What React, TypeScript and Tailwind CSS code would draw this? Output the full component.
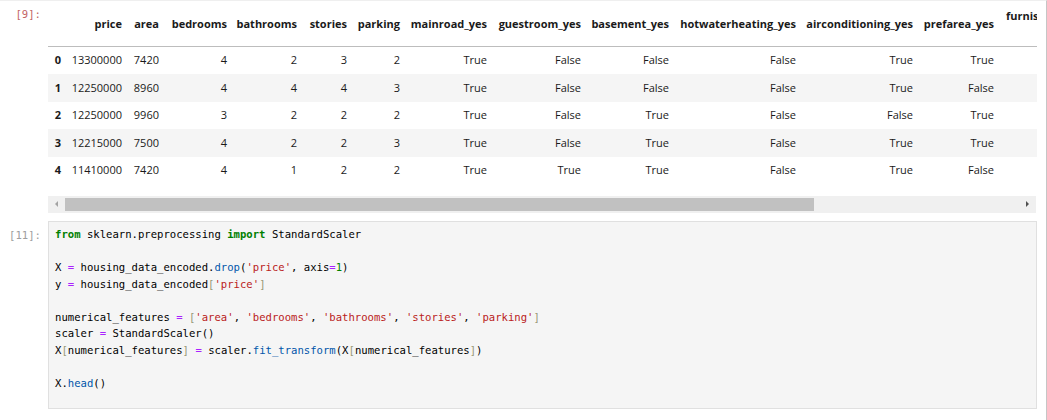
import React from 'react';

const columns = [
  { name: 'price', w: 62 },
  { name: 'area', w: 37 },
  { name: 'bedrooms', w: 68 },
  { name: 'bathrooms', w: 70 },
  { name: 'stories', w: 50 },
  { name: 'parking', w: 53 },
  { name: 'mainroad_yes', w: 87 },
  { name: 'guestroom_yes', w: 94 },
  { name: 'basement_yes', w: 88 },
  { name: 'hotwaterheating_yes', w: 127 },
  { name: 'airconditioning_yes', w: 117 },
  { name: 'prefarea_yes', w: 81 },
];

const rows = [
  ['13300000', '7420', '4', '2', '3', '2', 'True', 'False', 'False', 'False', 'True', 'True'],
  ['12250000', '8960', '4', '4', '4', '3', 'True', 'False', 'False', 'False', 'True', 'False'],
  ['12250000', '9960', '3', '2', '2', '2', 'True', 'False', 'True', 'False', 'False', 'True'],
  ['12215000', '7500', '4', '2', '2', '3', 'True', 'False', 'True', 'False', 'True', 'True'],
  ['11410000', '7420', '4', '1', '2', '2', 'True', 'True', 'True', 'False', 'True', 'False'],
];

const mono = "font-['DejaVu_Sans_Mono','Liberation_Mono',monospace] text-[10.6px]";

const Kw = ({ children }: { children: React.ReactNode }) => <span className="font-bold text-[#008000]">{children}</span>;
const Op = ({ children }: { children: React.ReactNode }) => <span className="text-[#aa22ff]">{children}</span>;
const Str = ({ children }: { children: React.ReactNode }) => <span className="text-[#ba2121]">{children}</span>;
const Num = ({ children }: { children: React.ReactNode }) => <span className="text-[#008000]">{children}</span>;
const Prop = ({ children }: { children: React.ReactNode }) => <span className="text-[#0055aa]">{children}</span>;
const Br = ({ children }: { children: React.ReactNode }) => <span className="text-[#999977]">{children}</span>;

function DataFrameOutput() {
  return (
    <div className="w-[989px] shrink-0 overflow-hidden">
      <table className="w-[1222px] table-fixed border-collapse font-['Open_Sans','Noto_Sans',sans-serif] text-[11px] text-[#1a1a1a]">
        <colgroup>
          <col className="w-[18px]" />
          {columns.map((c) => (
            <col key={c.name} style={{ width: c.w }} />
          ))}
          <col className="w-[270px]" />
        </colgroup>
        <thead>
          <tr className="border-b border-[#bdbdbd]">
            <th className="py-[5.5px]"></th>
            {columns.map((c) => (
              <th key={c.name} className="whitespace-nowrap py-[5.5px] pr-[6px] text-right align-middle font-bold leading-[17px]">
                {c.name}
              </th>
            ))}
            <th className="py-[5.5px] pl-[6px] pr-[6px] text-left align-middle font-bold leading-[17px]">
              <div className="whitespace-nowrap">furnishingstatus_semi-</div>
              <div className="whitespace-nowrap text-right">furnished</div>
            </th>
          </tr>
        </thead>
        <tbody>
          {rows.map((r, i) => (
            <tr key={i} className={i % 2 === 1 ? 'h-[27.5px] bg-[#f5f5f5]' : 'h-[27.5px]'}>
              <th className="pr-[5px] text-right font-bold">{i}</th>
              {r.map((v, j) => (
                <td key={j} className="whitespace-nowrap pr-[6px] text-right">
                  {v}
                </td>
              ))}
              <td></td>
            </tr>
          ))}
        </tbody>
      </table>
      <div className="mt-[11.5px] flex h-[17px] w-[988px] bg-[#f0f0f0]">
        <div className="flex w-[17px] items-center justify-center">
          <div className="h-0 w-0 border-y-[3.5px] border-r-[3.5px] border-y-transparent border-r-[#a3a3a3]" />
        </div>
        <div className="flex flex-1 items-center">
          <div className="h-[13px] w-[749px] bg-[#c1c1c1]" />
        </div>
        <div className="flex w-[17px] items-center justify-center">
          <div className="h-0 w-0 border-y-[3.5px] border-l-[3.5px] border-y-transparent border-l-[#505050]" />
        </div>
      </div>
    </div>
  );
}

function CodeCell() {
  return (
    <div className={`h-[188px] w-[989px] shrink-0 border border-[#e0e0e0] bg-[#f5f5f5] px-[6px] pt-[4.5px] leading-[16.5px] text-black ${mono}`}>
      <pre className="whitespace-pre font-[inherit]">
        <Kw>from</Kw> sklearn.preprocessing <Kw>import</Kw> StandardScaler{'\n'}
        {'\n'}
        X <Op>=</Op> housing_data_encoded.<Prop>drop</Prop>(<Str>'price'</Str>, axis<Op>=</Op><Num>1</Num>){'\n'}
        y <Op>=</Op> housing_data_encoded<Br>[</Br><Str>'price'</Str><Br>]</Br>{'\n'}
        {'\n'}
        numerical_features <Op>=</Op> <Br>[</Br><Str>'area'</Str>, <Str>'bedrooms'</Str>, <Str>'bathrooms'</Str>, <Str>'stories'</Str>, <Str>'parking'</Str><Br>]</Br>{'\n'}
        scaler <Op>=</Op> StandardScaler(){'\n'}
        X<Br>[</Br>numerical_features<Br>]</Br> <Op>=</Op> scaler.<Prop>fit_transform</Prop>(X<Br>[</Br>numerical_features<Br>]</Br>){'\n'}
        {'\n'}
        X.<Prop>head</Prop>()
      </pre>
    </div>
  );
}

export default function App() {
  return (
    <div className="h-[420px] w-[1047px] overflow-hidden border-t border-r border-t-[#efefef] border-r-[#c6c6c6] bg-white">
      <div className="flex">
        <div className={`w-[48px] shrink-0 pr-[7px] pt-[6px] text-right text-[#c26565] ${mono}`}>[9]:</div>
        <DataFrameOutput />
      </div>
      <div className="mt-[8px] flex">
        <div className={`w-[48px] shrink-0 pr-[7px] pt-[6px] text-right leading-[16.5px] text-[#9e9e9e] ${mono}`}>[11]:</div>
        <CodeCell />
      </div>
    </div>
  );
}
